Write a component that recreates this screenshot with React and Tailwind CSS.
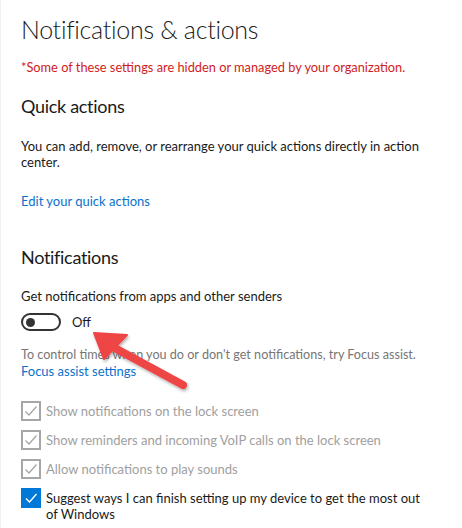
import React from "react";

const font = { fontFamily: 'Lato, "Noto Sans", sans-serif' };

function Check({ on }) {
  if (on) {
    return (
      <span className="w-[20px] h-[20px] shrink-0 bg-[#0078d7] flex items-center justify-center">
        <svg width="14" height="14" viewBox="0 0 14 14" fill="none">
          <path d="M2 7.5 L5.5 11 L12.5 3" stroke="#fff" strokeWidth="1.4" />
        </svg>
      </span>
    );
  }
  return (
    <span className="w-[20px] h-[20px] shrink-0 border-2 border-[#a6a6a6] flex items-center justify-center">
      <svg width="14" height="14" viewBox="0 0 14 14" fill="none">
        <path d="M1.5 7.5 L5 11 L12.5 2.5" stroke="#a6a6a6" strokeWidth="1.3" />
      </svg>
    </span>
  );
}

function Row({ children }) {
  return (
    <div className="flex items-center gap-[5px] h-[20px]">
      <Check />
      <span className="text-[13px] leading-[20px] text-[#a0a0a0]">{children}</span>
    </div>
  );
}

export default function App() {
  return (
    <div className="relative w-[462px] h-[528px] bg-white overflow-hidden border-l border-[#f2f2f2]" style={font}>
      <div className="pl-[20px] pr-[40px] text-[#1a1a1a]">
        <h1 className="pt-[11px] text-[25px] font-light leading-[36px] tracking-[-0.3px]">Notifications &amp; actions</h1>
        <p className="mt-[11px] text-[12.8px] leading-[18px] text-[#d01c1c] whitespace-nowrap">*Some of these settings are hidden or managed by your organization.</p>
        <h2 className="mt-[17px] text-[18px] font-normal leading-[26px] tracking-[-0.3px]">Quick actions</h2>
        <p className="mt-[19px] text-[13px] leading-[16px]">You can add, remove, or rearrange your quick actions directly in action center.</p>
        <p className="mt-[22px] text-[13px] leading-[18px] text-[#0a72cc]">Edit your quick actions</p>
        <h2 className="mt-[34px] text-[18px] font-normal leading-[26px] tracking-[-0.3px]">Notifications</h2>
        <p className="mt-[17px] text-[13px] leading-[18px]">Get notifications from apps and other senders</p>
        <div className="mt-[7px] flex items-center gap-[11px] h-[20px]">
          <span className="w-[40px] h-[18px] rounded-full border-2 border-[#333] flex items-center pl-[3px]">
            <span className="w-[9px] h-[9px] rounded-full bg-[#333]" />
          </span>
          <span className="text-[13px] leading-[20px]">Off</span>
        </div>
        <p className="mt-[15px] text-[12.6px] leading-[16px] text-[#767676] whitespace-nowrap">To control times when you do or don't get notifications, try Focus assist.</p>
        <p className="text-[13px] leading-[16px] text-[#0a72cc]">Focus assist settings</p>
        <div className="mt-[22px] flex flex-col gap-[9px]">
          <Row>Show notifications on the lock screen</Row>
          <Row>Show reminders and incoming VoIP calls on the lock screen</Row>
          <Row>Allow notifications to play sounds</Row>
          <div className="flex items-start gap-[5px]">
            <Check on />
            <span className="text-[13px] leading-[16px] pt-[2px] text-[#1a1a1a]">Suggest ways I can finish setting up my device to get the most out of Windows</span>
          </div>
        </div>
      </div>
      <svg className="absolute left-0 top-0 pointer-events-none" width="462" height="528" viewBox="0 0 462 528">
        <defs>
          <filter id="sh" x="-20%" y="-20%" width="140%" height="140%">
            <feDropShadow dx="1" dy="2" stdDeviation="1.5" floodColor="#000" floodOpacity="0.3" />
          </filter>
        </defs>
        <g filter="url(#sh)">
          <line x1="110" y1="346" x2="182" y2="385" stroke="#ee4444" strokeWidth="8" strokeLinecap="round" />
          <path d="M93 333 L126 335 L103 359 Z" fill="#ee4444" stroke="#ee4444" strokeWidth="2" strokeLinejoin="round" />
        </g>
      </svg>
    </div>
  );
}
